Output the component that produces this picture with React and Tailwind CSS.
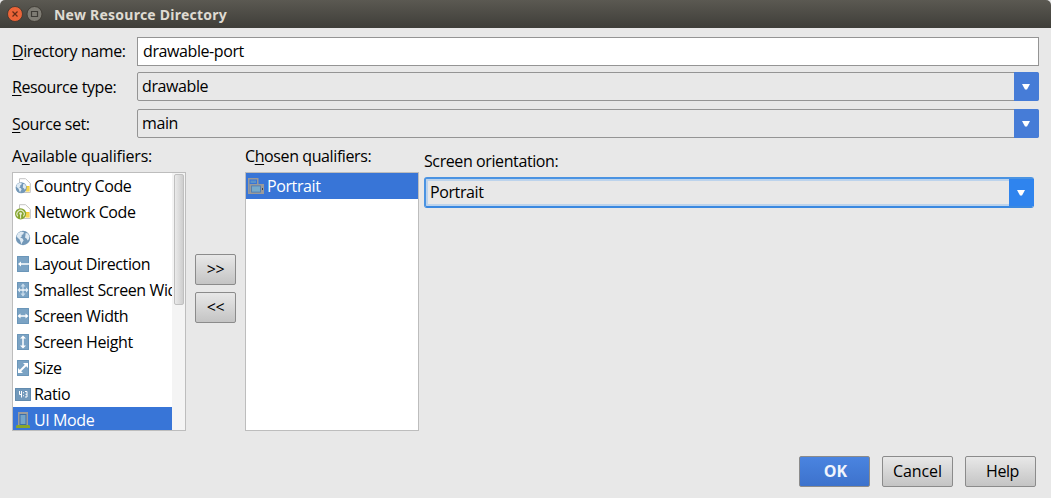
import React from 'react';

const ICON = 'block h-4 w-4 shrink-0';

function Globe({ small }) {
  return (
    <g transform={small ? 'translate(0 3.6) scale(.77)' : undefined}>
      <circle cx="8" cy="8" r="7.2" fill="#7398b8" />
      <path d="M3 3.2 6 1.6 9 2.2 8.2 4.2 6.6 5 6.8 6.6 5.2 7.4 7.6 8.6 8.6 10.4 7.2 12.4 6.6 14.4 5.4 11.6 4.6 9.4 2.4 7.4 1.6 6ZM10.6 3 13 3.6 14.4 6.4 14 9 12.6 10.6 11.8 8.8 10 7.6 10.4 5.4Z" fill="#dfeaf3" />
    </g>
  );
}

function Sim() {
  return (
    <g>
      <path d="M4.5.7h6l4.8 4.6v9.2H4.5Z" fill="#fff" stroke="#c4c4c4" strokeWidth="1" />
      <rect x="10.5" y="8" width="4" height="5.5" fill="#f2cb2e" />
      <path d="M10.5 10h4M10.5 12h4" stroke="#fae68c" strokeWidth=".7" />
    </g>
  );
}

function Tile({ children }) {
  return (
    <g>
      <rect x="2" y="0" width="12" height="16" fill="#7ba3c4" />
      <path d="M2.5.5h11v15h-11z" fill="none" stroke="#6b96b9" />
      <g fill="none" stroke="#fff" strokeWidth="1.5">{children}</g>
    </g>
  );
}

const icons = {
  country: <><Sim /><Globe small /></>,
  network: (
    <>
      <Sim />
      <circle cx="5.6" cy="9.8" r="5.6" fill="#86a52f" />
      <path d="M2.9 12.3a3.6 3.6 0 1 1 5.4 0M5.6 9.5v5" fill="none" stroke="#e9f0d5" strokeWidth="1.1" />
      <circle cx="5.6" cy="9.6" r="1.3" fill="#e9f0d5" />
    </>
  ),
  locale: <Globe />,
  direction: <Tile><path d="M4.5 8H14" /><path d="M6 5.5 3 8l3 2.5Z" fill="#fff" stroke="none" /></Tile>,
  smallest: (
    <Tile>
      <path d="M8 2.5v11" stroke="#c9dceb" strokeWidth="1.3" />
      <path d="M5.5 4.5 8 1.5l2.5 3ZM5.5 11.5 8 14.5l2.5-3Z" fill="#c9dceb" stroke="none" />
      <path d="M4 8h8" strokeWidth="1.3" />
      <path d="M5 5.5 2.5 8 5 10.5ZM11 5.5 13.5 8 11 10.5Z" fill="#e3eef7" stroke="none" />
    </Tile>
  ),
  width: <Tile><path d="M4 8h8" /><path d="M5.5 5.5 2.5 8l3 2.5ZM10.5 5.5l3 2.5-3 2.5Z" fill="#fff" stroke="none" /></Tile>,
  height: <Tile><path d="M8 3v10" /><path d="M5 4.5 8 1.5l3 3ZM5 11.5l3 3 3-3Z" fill="#fff" stroke="none" /></Tile>,
  size: <Tile><path d="m4.5 11.5 7-7" strokeWidth="2" /><path d="M8 3h5v5ZM3 8v5h5Z" fill="#fff" stroke="none" /></Tile>,
  ratio: (
    <>
      <rect x="0" y="2" width="16" height="13" fill="#7199bb" />
      <path d="M.5 2.5h15v12H.5z" fill="none" stroke="#628bae" />
      <path d="M4.5 5v3.5H7M6.5 5v6.5M10 5.5h2V11h-2M10.5 8.3H12" fill="none" stroke="#fff" strokeWidth="1" />
      <path d="M8 6.3h1v1H8zM8 9.3h1v1H8z" fill="#fff" />
    </>
  ),
  ui: (
    <>
      <path d="M3 0h10v13.5H3z" fill="#9c9c9c" />
      <path d="M4.5 2h7v11h-7z" fill="#3c6ea8" />
      <path d="M5.5 3h5v9h-5z" fill="#74a5ca" />
      <path d="M2 13h12l1 1v2H1v-2Z" fill="#8aa62a" />
    </>
  ),
  orientation: (
    <>
      <path d="M.75 15V.75h9V6" fill="none" stroke="#999" strokeWidth="1.5" />
      <path d="M2.5 2.500h5.500V5H2.500z" fill="#5b93c9" />
      <path d="M0 14.500h3V16H0z" fill="#999" />
      <path d="M1.500 6H16v10H1.500z" fill="#9a9a9a" />
      <path d="M3.200 7.500h9.600v7H3.200z" fill="#4379b5" />
      <path d="M4 8.300h8v5.400H4z" fill="#76aacb" />
      <path d="M14 10h1v2h-1z" fill="#444" />
    </>
  ),
};

const qualifiers = [
  { icon: 'country', label: 'Country Code' },
  { icon: 'network', label: 'Network Code' },
  { icon: 'locale', label: 'Locale' },
  { icon: 'direction', label: 'Layout Direction' },
  { icon: 'smallest', label: 'Smallest Screen Width' },
  { icon: 'width', label: 'Screen Width' },
  { icon: 'height', label: 'Screen Height' },
  { icon: 'size', label: 'Size' },
  { icon: 'ratio', label: 'Ratio' },
  { icon: 'ui', label: 'UI Mode' },
];

function Label({ before = '', mnemonic, after, className = '' }) {
  return (
    <div className={`whitespace-nowrap ${className}`}>
      {before}
      <span className="underline decoration-1 underline-offset-2">{mnemonic}</span>
      {after}
    </div>
  );
}

function Arrow() {
  return (
    <svg viewBox="0 0 8 6" className="mr-px block h-1.5 w-2">
      <path d="M0 0h8L5 5.5H3Z" fill="#fff" />
    </svg>
  );
}

function Combo({ value }) {
  return (
    <div className="flex h-[29px] w-[902px] rounded-[2px] border border-[#949494]">
      <div className="flex-1 pl-1 leading-[26px]">{value}</div>
      <div className="-m-px flex w-[25px] items-center justify-center rounded-r-[2px] bg-[#467cd7]">
        <Arrow />
      </div>
    </div>
  );
}

function Button({ children, className = '' }) {
  return (
    <button className={`flex h-[31px] items-center justify-center rounded-[2px] border border-[#8b8b8b] bg-linear-to-b from-[#e8e8e8] to-[#c4c4c4] pb-0.5 ${className}`}>
      {children}
    </button>
  );
}

function ListRow({ icon, label, selected }) {
  return (
    <div className={`flex h-[26px] items-center gap-[3px] whitespace-nowrap pl-0.5 ${selected ? 'bg-[#3875d7] text-white' : ''}`}>
      <svg viewBox="0 0 16 16" className={ICON}>{icons[icon]}</svg>
      <span>{label}</span>
    </div>
  );
}

export default function App() {
  return (
    <div className="h-[498px] w-[1051px] overflow-hidden bg-[#e8e8e8] font-['Open_Sans','Noto_Sans',sans-serif] text-[16px] tracking-[-0.4px] text-black">
      <div className="flex h-7 items-center rounded-t-[5px] bg-linear-to-b from-[#5b5952] to-[#3f3e39] pl-[7px]">
        <svg viewBox="0 0 36 16" className="block h-4 w-9">
          <circle cx="8" cy="8" r="7.5" fill="#ec6438" stroke="#38352f" strokeWidth=".8" />
          <path d="m5.5 5.5 5 5m0-5-5 5" stroke="#642c17" strokeWidth="1.2" />
          <circle cx="27.5" cy="8" r="7.5" fill="#7e7c74" stroke="#38352f" strokeWidth=".8" />
          <path d="M24.5 5.5h6v5h-6z" fill="none" stroke="#3d3b36" strokeWidth="1.2" />
        </svg>
        <div className="pl-[11px] pt-px font-['Noto_Sans',sans-serif] text-[14px] font-bold tracking-[0.24px] text-[#dfdbd2]">New Resource Directory</div>
      </div>

      <div className="flex flex-col pl-3 pt-[9px]">
        <div className="flex h-[29px]">
          <Label mnemonic="D" after="irectory name:" className="w-[125px] leading-[28px]" />
          <div className="w-[902px] border border-[#949494] bg-white pl-[5px] leading-[26px]">drawable-port</div>
        </div>
        <div className="mt-1.5 flex h-[29px]">
          <Label mnemonic="R" after="esource type:" className="w-[125px] leading-[30px]" />
          <Combo value="drawable" />
        </div>
        <div className="mt-2 flex h-[29px]">
          <Label mnemonic="S" after="ource set:" className="w-[125px] leading-[30px]" />
          <Combo value="main" />
        </div>
      </div>

      <div className="flex h-[293px] pl-3">
        <div className="w-[174px] pt-[6px]">
          <Label before="A" mnemonic="v" after="ailable qualifiers:" className="h-[28px] leading-[24px] tracking-[-0.2px]" />
          <div className="flex h-[259px] overflow-hidden border border-[#bdbdbd] bg-white">
            <div className="w-[159px] overflow-hidden">
              {qualifiers.map((q) => (
                <ListRow key={q.label} icon={q.icon} label={q.label} selected={q.icon === 'ui'} />
              ))}
            </div>
            <div className="w-[13px] bg-[#f4f4f4] pl-[2px] pt-px">
              <div className="h-[131px] w-[10px] rounded-[2px] border border-[#c0c0c0] bg-linear-to-r from-[#eaeaea] to-[#cecece]" />
            </div>
          </div>
        </div>

        <div className="flex w-[59px] flex-col items-center gap-[7px] pt-[116px]">
          <Button className="w-[41px]">&gt;&gt;</Button>
          <Button className="w-[41px]">&lt;&lt;</Button>
        </div>

        <div className="w-[174px] pt-[6px]">
          <Label before="C" mnemonic="h" after="osen qualifiers:" className="h-[28px] leading-[24px]" />
          <div className="h-[259px] border border-[#bdbdbd] bg-white">
            <ListRow icon="orientation" label="Portrait" selected />
          </div>
        </div>

        <div className="pl-[5px] pt-[11px]">
          <div className="h-[28px] leading-[24px]">Screen orientation:</div>
          <div className="flex h-[31px] w-[610px] rounded-[3px] border-2 border-[#4a93e2] border-b-[#3a88e0] shadow-[inset_0_0_0_2px_#bcd3ec]">
            <div className="flex-1 pl-1 leading-[26px]">Portrait</div>
            <div className="-mr-0.5 flex w-[25px] items-center justify-center bg-[#2f84ee]"><Arrow /></div>
          </div>
        </div>
      </div>

      <div className="flex gap-3 pl-[799px] pt-[25px]">
        <Button className="w-[71px] from-[#4a84e0]! to-[#3d72cc]! pl-0.5 font-bold tracking-normal text-[#f0f4fc]">OK</Button>
        <Button className="w-[71px] tracking-[-0.1px]">Cancel</Button>
        <Button className="w-[71px] pl-1">Help</Button>
      </div>
    </div>
  );
}
